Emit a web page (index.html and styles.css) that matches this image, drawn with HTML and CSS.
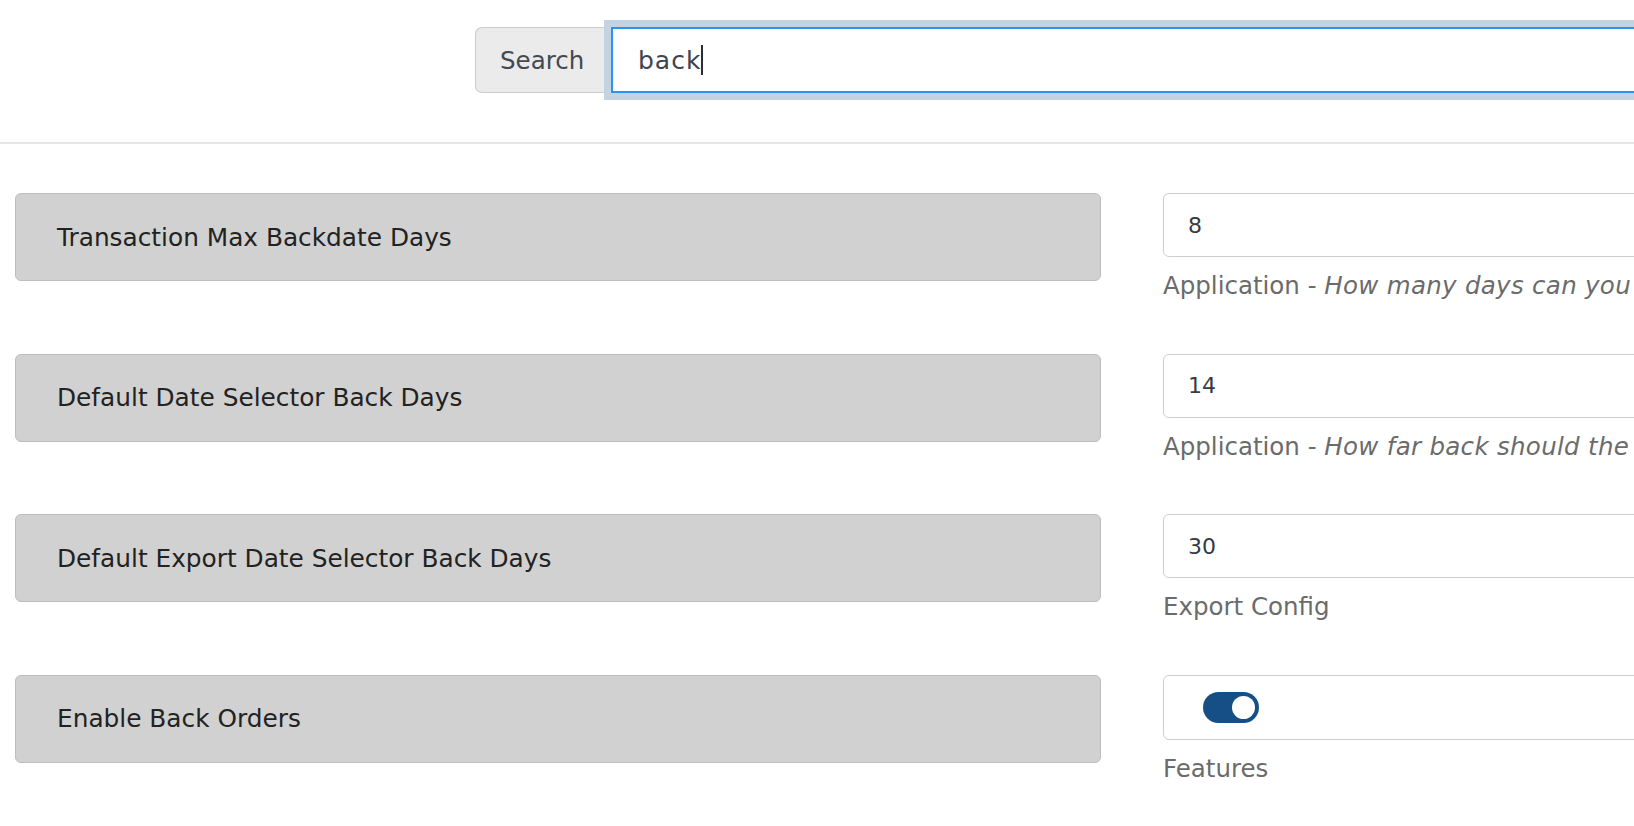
FILE: index.html
```html
<!DOCTYPE html>
<html lang="en">
<head>
<meta charset="utf-8">
<title>Settings search</title>
<link rel="stylesheet" href="styles.css">
</head>
<body>
<header class="topbar">
  <div class="search-group">
    <span class="search-addon">Search</span>
    <div class="search-input">back<span class="caret"></span></div>
  </div>
</header>
<main class="settings">
  <div class="setting-row">
    <div class="setting-label">Transaction Max Backdate Days</div>
    <div class="setting-control">
      <div class="field">8</div>
      <p class="help">Application - <em>How many days can you backdate a transaction</em></p>
    </div>
  </div>
  <div class="setting-row">
    <div class="setting-label">Default Date Selector Back Days</div>
    <div class="setting-control">
      <div class="field">14</div>
      <p class="help">Application - <em>How far back should the date selector default to</em></p>
    </div>
  </div>
  <div class="setting-row">
    <div class="setting-label">Default Export Date Selector Back Days</div>
    <div class="setting-control">
      <div class="field">30</div>
      <p class="help">Export Config</p>
    </div>
  </div>
  <div class="setting-row">
    <div class="setting-label">Enable Back Orders</div>
    <div class="setting-control">
      <div class="field field-switch"><span class="switch is-on"></span></div>
      <p class="help">Features</p>
    </div>
  </div>
</main>
</body>
</html>
```

FILE: styles.css
```css
html, body {
  margin: 0;
  padding: 0;
  overflow: hidden;
  background: #ffffff;
}

body {
  width: 1634px;
  height: 826px;
  font-family: "DejaVu Sans", "Liberation Sans", sans-serif;
  color: #212121;
}

.topbar {
  padding: 27px 0 49px 0;
  border-bottom: 2px solid #e6e6e6;
}

.search-group {
  display: flex;
  margin-left: 475px;
  width: 1400px;
  height: 66px;
}

.search-addon {
  display: flex;
  align-items: center;
  box-sizing: border-box;
  width: 136px;
  padding-left: 24px;
  background: #ebebeb;
  border: 1px solid #c9cbcd;
  border-right: none;
  border-radius: 7px 0 0 7px;
  font-size: 24.5px;
  color: #434a51;
}

.search-input {
  flex: 1;
  display: flex;
  align-items: center;
  box-sizing: border-box;
  padding-left: 25px;
  border: 2px solid #2b92f0;
  box-shadow: 0 0 0 7px #c4d3e1;
  background: #ffffff;
  font-size: 25px;
  letter-spacing: 1px;
  color: #3e454c;
}

.caret {
  display: inline-block;
  width: 2px;
  height: 30px;
  margin-left: 0;
  background: #2a2f34;
}

.settings {
  display: flex;
  flex-direction: column;
  gap: 50.5px;
  padding: 49px 0 0 15px;
}

.setting-row {
  display: grid;
  grid-template-columns: 1086px 900px;
  column-gap: 62px;
  align-items: start;
}

.setting-label {
  display: flex;
  align-items: center;
  box-sizing: border-box;
  height: 88px;
  padding-left: 41px;
  background: #d1d1d1;
  border: 1px solid #bdbdbd;
  border-radius: 6px;
  font-size: 24.8px;
  color: #222222;
}

.setting-control {
  display: flex;
  flex-direction: column;
}

.field {
  display: flex;
  align-items: center;
  box-sizing: border-box;
  height: 64px;
  padding-left: 24px;
  border: 1px solid #cbcfd3;
  border-radius: 6px;
  background: #ffffff;
  font-size: 22px;
  color: #353b41;
}

.field-switch {
  height: 65px;
  padding-left: 39px;
}

.switch {
  position: relative;
  display: inline-block;
  width: 56px;
  height: 31px;
  border-radius: 16px;
  background: #154f86;
}

.switch.is-on::after {
  content: "";
  position: absolute;
  top: 4px;
  right: 4px;
  width: 23px;
  height: 23px;
  border-radius: 50%;
  background: #ffffff;
}

.help {
  margin: 12px 0 0 0;
  line-height: 34px;
  font-size: 24.5px;
  color: #6b6b6b;
  white-space: nowrap;
}

.help em {
  font-style: italic;
  letter-spacing: 0.3px;
}
```
